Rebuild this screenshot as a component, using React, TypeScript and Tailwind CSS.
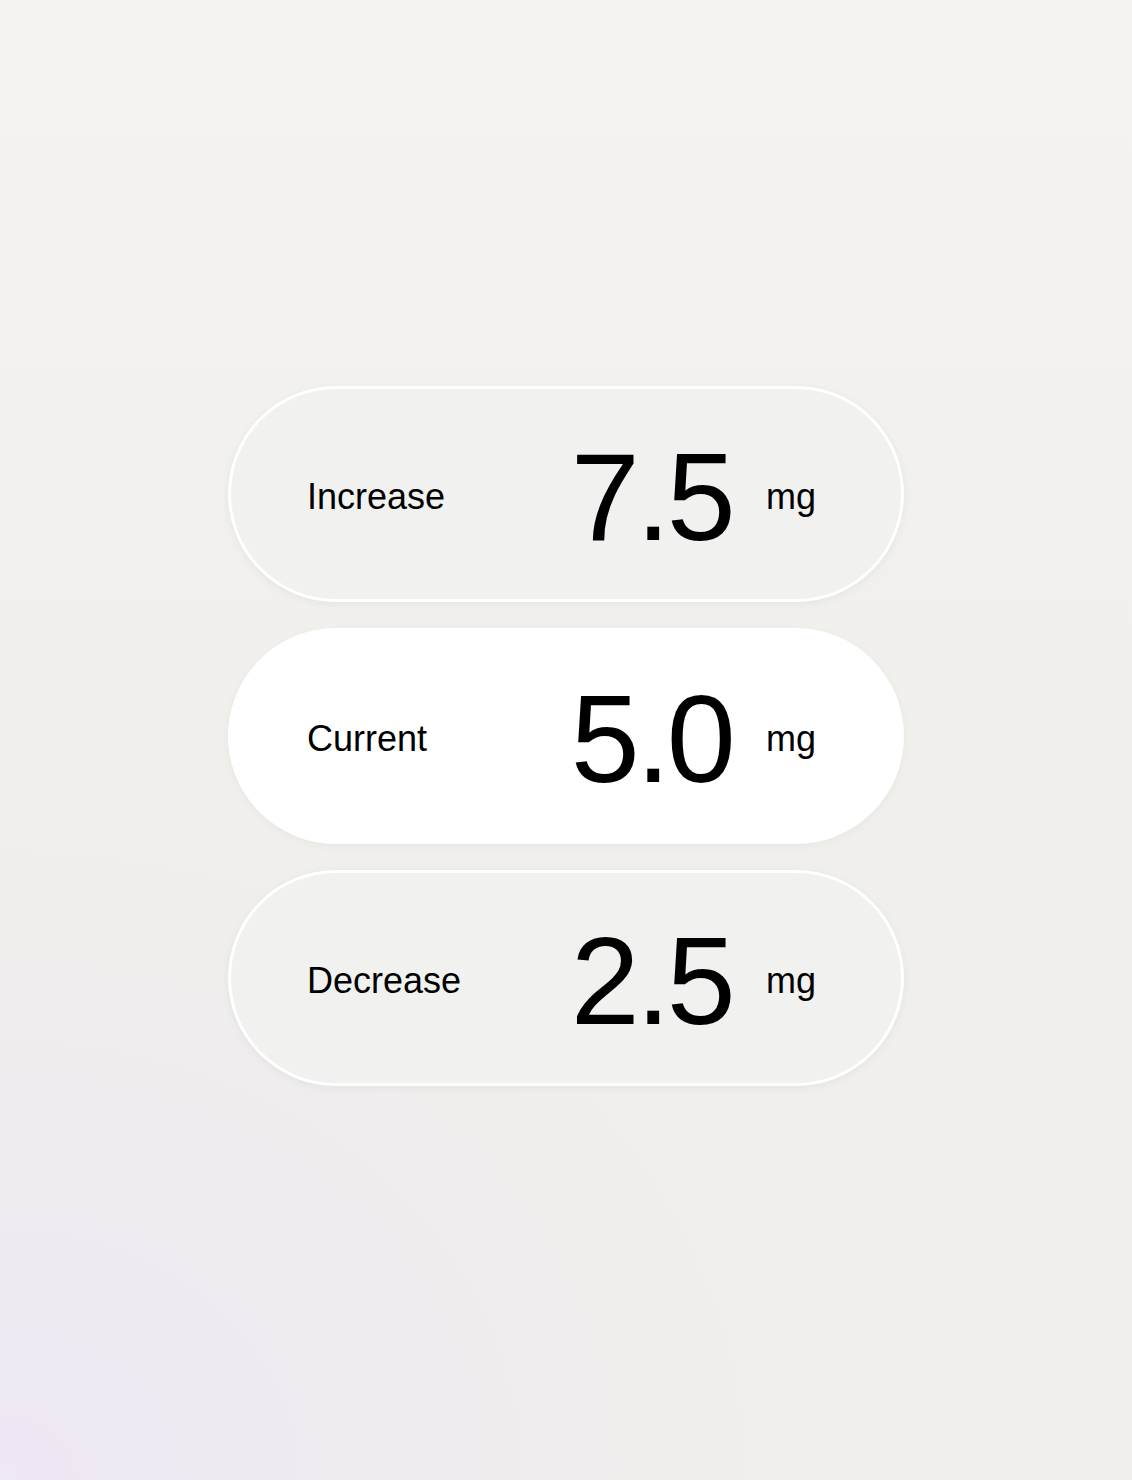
const rows = [
  { label: "Increase", value: "7.5", active: false },
  { label: "Current", value: "5.0", active: true },
  { label: "Decrease", value: "2.5", active: false },
];

function DoseRow({ label, value, active }: { label: string; value: string; active: boolean }) {
  return (
    <div
      className={
        active
          ? "flex h-[216px] w-[676px] items-center rounded-full border-[3px] border-white bg-white pl-[76px] pr-[85px] shadow-[0_2px_8px_rgba(0,0,0,0.04)]"
          : "flex h-[216px] w-[676px] items-center rounded-full border-[3px] border-white bg-[#f1f1ef] pl-[76px] pr-[85px] shadow-[0_2px_8px_rgba(0,0,0,0.05)]"
      }
    >
      <span className="flex-1 pt-[5px] text-[36px] leading-none text-black">{label}</span>
      <span className="pt-[5px] text-[124px] leading-none tracking-[-0.03em] text-black">{value}</span>
      <span className="ml-[34px] pt-[5px] text-[36px] leading-none text-black">mg</span>
    </div>
  );
}

export default function App() {
  return (
    <div
      className="flex min-h-screen flex-col items-center justify-center gap-[26px] bg-[#f1f0ec] bg-[radial-gradient(ellipse_70%_45%_at_0%_100%,#eee7f4_0%,rgba(241,240,236,0)_100%),linear-gradient(to_bottom,#f4f3f0_0%,#f0efeb_50%,#f0efeb_100%)] pb-2"
      style={{ fontFamily: '"Liberation Sans", Arial, sans-serif' }}
    >
      {rows.map((r) => (
        <DoseRow key={r.label} {...r} />
      ))}
    </div>
  );
}
